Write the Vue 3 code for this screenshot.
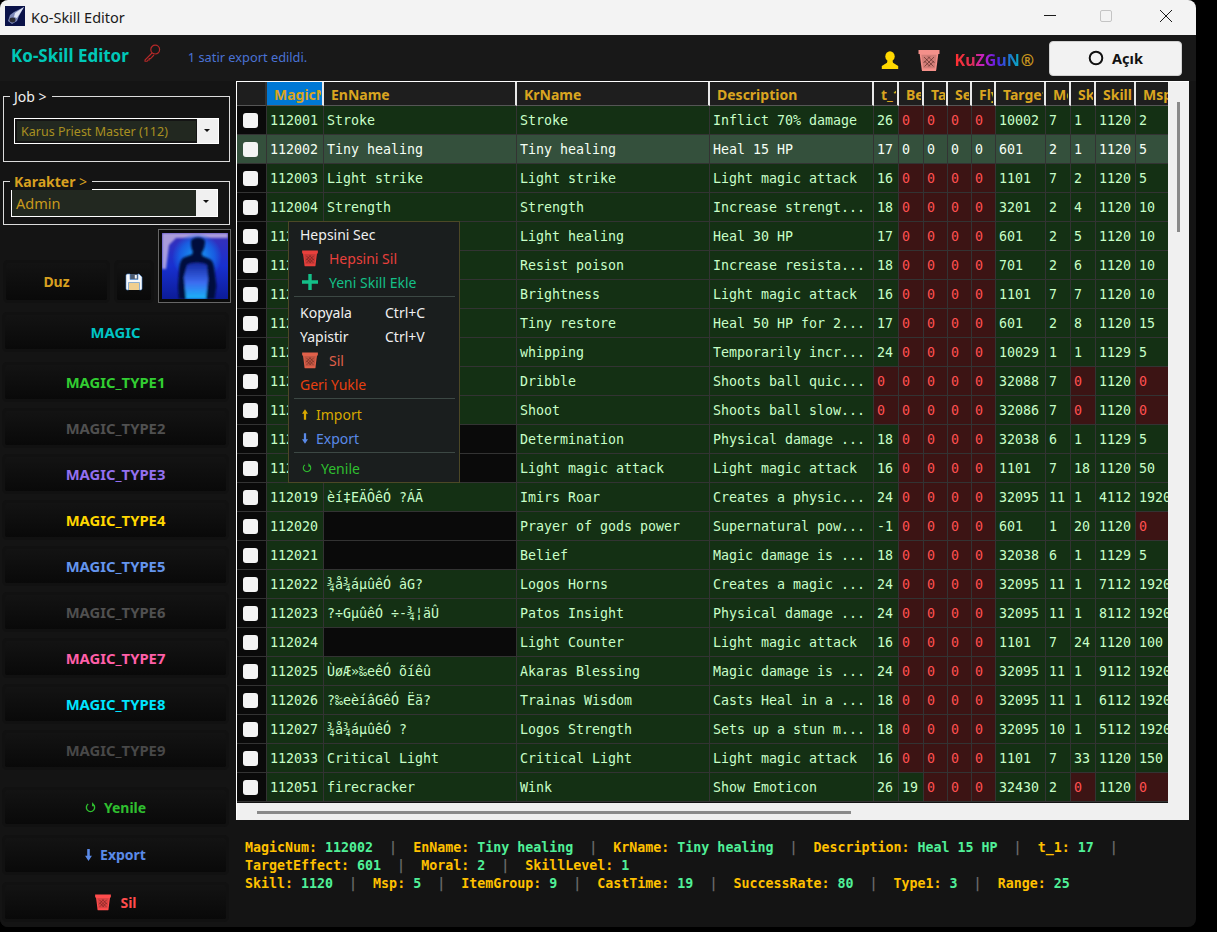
<template>
  <div class="window">
    <svg class="defs" aria-hidden="true">
      <symbol id="trash" viewBox="0 0 24 24">
        <path d="M1.500 2h21v4h-21z" fill="currentColor" />
        <path d="M3.500 6h17l-2 15.500h-13z" fill="currentColor" fill-opacity=".85" stroke="currentColor" stroke-width="1.600" />
        <path d="M5 20.500h14v2.500H5z" fill="currentColor" />
        <path d="M7 9l9.500 9.500M11 8.500l6.500 6.500M7.500 13l5.500 5.500M17 9l-9.500 9.500M13 8.500L6.500 15M16.800 13l-5.500 5.500" stroke="#3a1410" stroke-width=".7" stroke-opacity=".75" fill="none" />
      </symbol>
    </svg>

    <div class="titlebar">
      <svg class="app-icon" viewBox="0 0 20 20">
        <rect width="20" height="20" fill="#0a1248" />
        <path d="M19 1L9 6 5 9l-2 6 4 3 5-3 2-5z" fill="#7c88b8" />
        <path d="M19 1L10 7l-1 4 3 1z" fill="#dfe4f4" />
        <ellipse cx="7.500" cy="14" rx="3" ry="2.400" fill="#2c2c34" />
      </svg>
      <span class="title">Ko-Skill Editor</span>
      <div class="win-btns">
        <svg viewBox="0 0 12 12" width="12" height="12" class="wb1"><path d="M0 5.500h12" stroke="#1a1a1a" /></svg>
        <svg viewBox="0 0 12 12" width="12" height="12" class="wb2"><rect x=".5" y=".5" width="11" height="11" rx="1.500" fill="none" stroke="#c4c4c4" /></svg>
        <svg viewBox="0 0 12 12" width="12" height="12" class="wb3"><path d="M0 0l12 12M12 0L0 12" stroke="#1a1a1a" /></svg>
      </div>
    </div>

    <div class="topbar">
      <span class="brand">Ko-Skill Editor</span>
      <svg class="key" viewBox="0 0 18 18" width="18" height="18">
        <circle cx="12.200" cy="5.600" r="4.400" fill="none" stroke="#b42828" stroke-width="1.200" />
        <path d="M9 9L2 16v1.200h2.200L5 16h1.200v-1.400h1.300L11 11" fill="none" stroke="#b42828" stroke-width="1.100" />
      </svg>
      <span class="status">1 satir export edildi.</span>
      <svg class="person" viewBox="0 0 20 20" width="20" height="20">
        <ellipse cx="10" cy="6.400" rx="4.700" ry="5.200" fill="#ffd800" />
        <path d="M7.500 10.500l-.5 2.200L1.800 16v3h16.400v-3L13 12.700l-.5-2.200z" fill="#ffd800" />
      </svg>
      <svg class="basket-top"><use href="#trash" /></svg>
      <span class="kuzgun"><span class="kuz-text">KuZGuN</span><span class="reg">®</span></span>
      <button class="open-btn">
        <svg viewBox="0 0 16 16" width="16" height="16"><circle cx="8" cy="8" r="6.300" fill="none" stroke="#111" stroke-width="2" /></svg>
        Açık
      </button>
    </div>

    <div class="body">
      <aside class="sidebar">
        <div class="group job-group">
          <span class="legend">Job &gt;</span>
          <div class="combo job-combo">
            <span class="combo-text">Karus Priest Master (112)</span>
            <span class="combo-arrow"></span>
          </div>
        </div>
        <div class="group char-group">
          <span class="legend gold"><b>Karakter</b> &gt;</span>
          <div class="combo char-combo">
            <span class="combo-text">Admin</span>
            <span class="combo-arrow"></span>
          </div>
        </div>
        <div class="tools">
          <button class="side-btn duz">Duz</button>
          <button class="side-btn save">
            <svg viewBox="0 0 18 18" width="18" height="18">
              <path d="M1 2.500A1.500 1.500 0 0 1 2.500 1H14l3 3v11.500a1.500 1.500 0 0 1-1.500 1.500h-13A1.500 1.500 0 0 1 1 15.500z" fill="#f8f8f8" />
              <rect x="5" y="1" width="8" height="5.500" fill="#4c5a70" />
              <rect x="9.800" y="2" width="2" height="3.500" fill="#f4f4f4" />
              <rect x="3.500" y="9.500" width="11" height="7.500" fill="#f0cf90" />
              <path d="M1 2.500A1.500 1.500 0 0 1 2.500 1H5v5.500h8V1h1l3 3v11.500a1.500 1.500 0 0 1-1.500 1.500H14.500V9.500h-11V17h-1A1.500 1.500 0 0 1 1 15.500z" fill="none" stroke="#4a8cd8" stroke-width=".6" />
            </svg>
          </button>
          <div class="avatar">
            <svg viewBox="0 0 66 66" width="66" height="66">
              <defs>
                <linearGradient id="aura" x1="0" y1="0" x2="0" y2="1">
                  <stop offset="0" stop-color="#3a30b8" />
                  <stop offset=".5" stop-color="#1830d0" />
                  <stop offset="1" stop-color="#0c1c98" />
                </linearGradient>
                <radialGradient id="glow" cx="50%" cy="50%" r="50%">
                  <stop offset="0" stop-color="#18a8f8" />
                  <stop offset=".7" stop-color="#1468e8" stop-opacity=".8" />
                  <stop offset="1" stop-color="#1468e8" stop-opacity="0" />
                </radialGradient>
                <linearGradient id="torso" x1="0" y1="0" x2="0" y2="1">
                  <stop offset="0" stop-color="#1428a0" />
                  <stop offset=".55" stop-color="#3c6cf0" />
                  <stop offset="1" stop-color="#18b4f8" />
                </linearGradient>
                <filter id="soft" x="-15%" y="-15%" width="130%" height="130%"><feGaussianBlur stdDeviation="1" /></filter>
              </defs>
              <rect width="66" height="66" fill="url(#aura)" />
              <path d="M0 0h66v5H14L7 12 4 36H0z" fill="#c8b8e4" opacity=".8" filter="url(#soft)" />
              <ellipse cx="35" cy="24" rx="25" ry="24" fill="url(#glow)" />
              <g filter="url(#soft)">
                <path d="M29 9c0-3 3-4.500 7-4.500S43 6 43 9c0 5-2 9-3.500 11l1 3 7 3c3 1.500 4.500 5 5 11l2 16-2 13H17l-1-12 1-17c.5-7 2-11 5-12.500l8-3 1-3c-1.500-2-2-5-2-8.500z" fill="#06103c" />
                <path d="M25 32c4-3 16-3 20 0l1 14-2 20H24l-2-22z" fill="url(#torso)" />
              </g>
            </svg>
          </div>
        </div>
        <div class="type-list">
          <button v-for="b in typeButtons" :key="b.name" class="side-btn type-btn" :style="{ color: b.color }">{{ b.name }}</button>
        </div>
        <div class="action-list">
          <button class="side-btn act green">
            <svg viewBox="0 0 12 12" width="11" height="11"><path d="M3.500 2.200A4.500 4.500 0 1 0 8.500 2.200" fill="none" stroke="currentColor" stroke-width="1.500" /><path d="M8.700 0v4.500h3.300z" fill="currentColor" transform="translate(-1 0)" /></svg>
            Yenile
          </button>
          <button class="side-btn act blue">
            <svg viewBox="0 0 8 14" width="7" height="12"><path d="M2.500 0h3v8H8l-4 6-4-6h2.500z" fill="currentColor" /></svg>
            Export
          </button>
          <button class="side-btn act red">
            <svg class="basket-btn"><use href="#trash" /></svg>
            Sil
          </button>
        </div>
      </aside>

      <main class="main">
        <div class="grid-box">
          <div class="grid-top">
            <div class="viewport">
              <div class="row head">
                <div class="cell"></div>
                <div v-for="(h, i) in headers" :key="h" class="cell" :class="{ current: i === 0 }"><span>{{ h }}</span></div>
              </div>
              <div v-for="r in rows" :key="r[0]" class="row" :class="{ selected: r[0] === '112002' }">
                <div class="cell check"><span class="box"></span></div>
                <div v-for="(c, i) in r" :key="i" class="cell" :class="{ zero: c === '0', blank: c === '' }">{{ c }}</div>
              </div>
            </div>
            <div class="vscroll"><div class="vthumb"></div></div>
          </div>
          <div class="hscroll"><div class="hthumb"></div></div>
        </div>
        <div class="info">
          <div v-for="(line, n) in infoLines" :key="n" class="info-line">
            <template v-for="(item, i) in line" :key="item[0]">
              <span class="k">{{ item[0] }}: </span><span class="v">{{ item[1] }}</span><span v-if="i < line.length - 1 || n === 0" class="sep">{{ SEP }}</span>
            </template>
          </div>
        </div>
      </main>
    </div>

    <div class="menu">
      <div class="mi white">Hepsini Sec</div>
      <div class="mi hot"><svg class="m-basket"><use href="#trash" /></svg>Hepsini Sil</div>
      <div class="mi teal">
        <svg class="m-plus" viewBox="0 0 16 16" width="16" height="16"><path d="M6.300 0h3.400v6.300H16v3.400H9.700V16H6.300V9.700H0V6.300h6.300z" fill="currentColor" /></svg>
        Yeni Skill Ekle
      </div>
      <div class="msep"></div>
      <div class="mi white split"><span>Kopyala</span><span>Ctrl+C</span></div>
      <div class="mi white split"><span>Yapistir</span><span>Ctrl+V</span></div>
      <div class="mi coral"><svg class="m-basket"><use href="#trash" /></svg>Sil</div>
      <div class="mi orange">Geri Yukle</div>
      <div class="msep"></div>
      <div class="mi amber">
        <svg class="m-arrow" viewBox="0 0 8 14" width="6" height="11"><path d="M2.500 14h3V6H8L4 0 0 6h2.500z" fill="currentColor" /></svg>
        Import
      </div>
      <div class="mi blue">
        <svg class="m-arrow" viewBox="0 0 8 14" width="6" height="11"><path d="M2.500 0h3v8H8l-4 6-4-6h2.500z" fill="currentColor" /></svg>
        Export
      </div>
      <div class="msep"></div>
      <div class="mi green">
        <svg class="m-refresh" viewBox="0 0 12 12" width="10" height="10"><path d="M3.500 2.200A4.500 4.500 0 1 0 8.500 2.200" fill="none" stroke="currentColor" stroke-width="1.300" /><path d="M8.700 0v4.500h3.300z" fill="currentColor" transform="translate(-1 0)" /></svg>
        Yenile
      </div>
    </div>
  </div>
</template>

<script setup>
const SEP = '  |  ';

const typeButtons = [
  { name: 'MAGIC', color: '#00c4c4' },
  { name: 'MAGIC_TYPE1', color: '#32cd32' },
  { name: 'MAGIC_TYPE2', color: '#505050' },
  { name: 'MAGIC_TYPE3', color: '#9370f0' },
  { name: 'MAGIC_TYPE4', color: '#ffd700' },
  { name: 'MAGIC_TYPE5', color: '#6495ed' },
  { name: 'MAGIC_TYPE6', color: '#505050' },
  { name: 'MAGIC_TYPE7', color: '#ff5fa8' },
  { name: 'MAGIC_TYPE8', color: '#00e5ff' },
  { name: 'MAGIC_TYPE9', color: '#484848' },
];

const headers = ['MagicNum', 'EnName', 'KrName', 'Description', 't_1', 'BeforeAction', 'TargetAction', 'SelfEffect', 'FlyingEffect', 'TargetEffect', 'Moral', 'SkillLevel', 'Skill', 'Msp'];

const rows = [
  '112001|Stroke|Stroke|Inflict 70% damage|26|0|0|0|0|10002|7|1|1120|2',
  '112002|Tiny healing|Tiny healing|Heal 15 HP|17|0|0|0|0|601|2|1|1120|5',
  '112003|Light strike|Light strike|Light magic attack|16|0|0|0|0|1101|7|2|1120|5',
  '112004|Strength|Strength|Increase strengt...|18|0|0|0|0|3201|2|4|1120|10',
  '112005|Light healing|Light healing|Heal 30 HP|17|0|0|0|0|601|2|5|1120|10',
  '112006|Resist poison|Resist poison|Increase resista...|18|0|0|0|0|701|2|6|1120|10',
  '112007|Brightness|Brightness|Light magic attack|16|0|0|0|0|1101|7|7|1120|10',
  '112008|Tiny restore|Tiny restore|Heal 50 HP for 2...|17|0|0|0|0|601|2|8|1120|15',
  '112009|whipping|whipping|Temporarily incr...|24|0|0|0|0|10029|1|1|1129|5',
  '112010|Dribble|Dribble|Shoots ball quic...|0|0|0|0|0|32088|7|0|1120|0',
  '112011|Shoot|Shoot|Shoots ball slow...|0|0|0|0|0|32086|7|0|1120|0',
  '112012||Determination|Physical damage ...|18|0|0|0|0|32038|6|1|1129|5',
  '112018||Light magic attack|Light magic attack|16|0|0|0|0|1101|7|18|1120|50',
  '112019|èí‡EÄÔêÓ ?ÁÃ|Imirs Roar|Creates a physic...|24|0|0|0|0|32095|11|1|4112|1920',
  '112020||Prayer of gods power|Supernatural pow...|-1|0|0|0|0|601|1|20|1120|0',
  '112021||Belief|Magic damage is ...|18|0|0|0|0|32038|6|1|1129|5',
  '112022|¾å¾áµûêÓ âG?|Logos Horns|Creates a magic ...|24|0|0|0|0|32095|11|1|7112|1920',
  '112023|?÷GµûêÓ ÷-¾¦äÛ|Patos Insight|Physical damage ...|24|0|0|0|0|32095|11|1|8112|1920',
  '112024||Light Counter|Light magic attack|16|0|0|0|0|1101|7|24|1120|100',
  '112025|ÙøÆ»‰eêÓ õíêû|Akaras Blessing|Magic damage is ...|24|0|0|0|0|32095|11|1|9112|1920',
  '112026|?‰eèíâGêÓ Ëä?|Trainas Wisdom|Casts Heal in a ...|18|0|0|0|0|32095|11|1|6112|1920',
  '112027|¾å¾áµûêÓ ?|Logos Strength|Sets up a stun m...|18|0|0|0|0|32095|10|1|5112|1920',
  '112033|Critical Light|Critical Light|Light magic attack|16|0|0|0|0|1101|7|33|1120|150',
  '112051|firecracker|Wink|Show Emoticon|26|19|0|0|0|32430|2|0|1120|0',
].map((line) => line.split('|'));

const infoLines = [
  [['MagicNum', '112002'], ['EnName', 'Tiny healing'], ['KrName', 'Tiny healing'], ['Description', 'Heal 15 HP'], ['t_1', '17']],
  [['TargetEffect', '601'], ['Moral', '2'], ['SkillLevel', '1']],
  [['Skill', '1120'], ['Msp', '5'], ['ItemGroup', '9'], ['CastTime', '19'], ['SuccessRate', '80'], ['Type1', '3'], ['Range', '25']],
];
</script>

<style>
html,
body {
  background: #000;
  overflow: hidden;
}
</style>

<style scoped>
.window {
  position: relative;
  width: 1196px;
  height: 927px;
  display: flex;
  flex-direction: column;
  background: #141414;
  border-radius: 8px;
  overflow: hidden;
  font-family: "Noto Sans", sans-serif;
}
.defs {
  position: absolute;
  width: 0;
  height: 0;
}
.titlebar {
  height: 35px;
  flex-shrink: 0;
  display: flex;
  align-items: center;
  background: #f3f3f3;
  color: #1a1a1a;
  font-size: 14.500px;
}
.app-icon {
  width: 20px;
  height: 20px;
  margin: 0 6px 3px 5px;
}
.title {
  margin-bottom: 2px;
}
.win-btns {
  margin-left: auto;
  margin-bottom: 3px;
  display: flex;
  align-items: center;
}
.wb2 {
  margin-left: 44px;
}
.wb3 {
  margin: 0 24px 0 48px;
}
.topbar {
  height: 46px;
  flex-shrink: 0;
  display: flex;
  align-items: center;
  background: #181818;
}
.brand {
  margin-left: 11px;
  color: #00c8b8;
  font-size: 17px;
  font-weight: 700;
  margin-bottom: 5px;
}
.key {
  margin: -10px 0 0 14px;
}
.status {
  margin-left: 27px;
  margin-bottom: 2px;
  color: #4a72d4;
  font-size: 12.800px;
}
.person {
  margin-left: auto;
  margin-top: 3px;
}
.basket-top {
  width: 24px;
  height: 24px;
  margin: 3px 0 0 17px;
  color: #f4908a;
}
.kuzgun {
  margin: 3px 0 0 14px;
  font-size: 16px;
  font-weight: 700;
}
.kuz-text {
  background: linear-gradient(90deg, #ff3030 0%, #e03050 25%, #c020d0 45%, #5020e0 65%, #2070d0 82%, #08b0c0 100%);
  -webkit-background-clip: text;
  background-clip: text;
  color: transparent;
}
.reg {
  margin-left: 1px;
  color: #c8961e;
}
.open-btn {
  width: 133px;
  height: 35px;
  margin: 0 14px 0 15px;
  display: flex;
  align-items: center;
  justify-content: center;
  gap: 8px;
  background: #f2f2f2;
  border: 1px solid #d0d0d0;
  border-radius: 4px;
  color: #111;
  font-family: inherit;
  font-size: 14.500px;
  font-weight: 700;
}
.body {
  flex: 1;
  display: flex;
  min-height: 0;
}
.sidebar {
  width: 236px;
  flex-shrink: 0;
  box-sizing: border-box;
  padding-left: 3px;
  background: #141414;
}
.group {
  position: relative;
  width: 227px;
  box-sizing: border-box;
  border: 1px solid #dcdcdc;
}
.job-group {
  height: 66px;
  margin-top: 15px;
  padding: 21px 10px 0;
}
.char-group {
  height: 44px;
  margin-top: 19px;
  padding: 7px 11px 0 7px;
}
.legend {
  position: absolute;
  top: -9px;
  left: 6px;
  padding: 0 5px 0 4px;
  background: #141414;
  color: #f0f0f0;
  font-size: 14px;
  line-height: 17px;
}
.legend.gold {
  color: #d8a020;
  top: -9px;
}
.combo {
  display: flex;
  box-sizing: border-box;
  border: 1px solid #fff;
  background: #f0f0f0;
}
.job-combo {
  height: 26px;
}
.char-combo {
  height: 28px;
}
.combo-text {
  flex: 1;
  display: flex;
  align-items: center;
  padding-left: 4px;
  background: #222820;
  color: #a89020;
  font-size: 12.500px;
}
.job-combo .combo-text {
  border: 2px solid #141414;
  border-right-width: 1px;
}
.char-combo .combo-text {
  color: #c89a1c;
  font-size: 14.500px;
}
.combo-arrow {
  width: 21px;
  position: relative;
}
.combo-arrow::after {
  content: "";
  position: absolute;
  left: 7px;
  top: 10px;
  border: 3px solid transparent;
  border-top: 3px solid #111;
  border-left-width: 3.500px;
  border-right-width: 3.500px;
}
.tools {
  height: 74px;
  margin-top: 4px;
  display: flex;
  align-items: flex-end;
}
.side-btn {
  display: flex;
  align-items: center;
  justify-content: center;
  box-sizing: border-box;
  padding: 0;
  border: 3px solid #111;
  border-radius: 5px;
  background: linear-gradient(#131313, #090909);
  font-family: inherit;
  font-size: 14px;
  font-weight: 700;
}
.duz {
  width: 107px;
  height: 43px;
  color: #d8a020;
}
.save {
  width: 40px;
  height: 43px;
  margin-left: 4px;
}
.avatar {
  width: 73px;
  height: 74px;
  box-sizing: border-box;
  margin-left: 4px;
  border: 1px solid #666;
  padding: 3px;
  background: #0a0a0a;
}
.avatar svg {
  display: block;
}
.type-list {
  display: flex;
  flex-direction: column;
  gap: 6px;
  margin-top: 9px;
  margin-left: -1px;
}
.type-btn {
  width: 227px;
  height: 40px;
  font-size: 14.800px;
}
.type-btn:first-child {
  margin-bottom: 4px;
}
.action-list {
  display: flex;
  flex-direction: column;
  gap: 7.500px;
  margin: 17px 0 0 -1px;
}
.act {
  width: 227px;
  height: 40px;
  gap: 8px;
}
.act.green,
.mi.green {
  color: #2fbf2f;
}
.act.blue,
.mi.blue {
  color: #5a8ae8;
}
.act.red {
  color: #ff4c4c;
}
.basket-btn {
  width: 18px;
  height: 18px;
}
.main {
  flex: 1;
  min-width: 0;
  display: flex;
  flex-direction: column;
}
.grid-box {
  width: 953px;
  height: 739px;
  box-sizing: border-box;
  display: flex;
  flex-direction: column;
  background: #f0f0f0;
  border-top: 1px solid #fff;
  border-left: 1px solid #fff;
}
.grid-top {
  height: 721px;
  display: flex;
}
.viewport {
  width: 931px;
  overflow: hidden;
  background: #141414;
}
.vscroll {
  flex: 1;
  padding: 20px 0 0 9px;
}
.vthumb {
  width: 3px;
  height: 130px;
  background: #8a8a8a;
}
.hscroll {
  flex: 1;
  padding: 8px 0 0 20px;
}
.hthumb {
  width: 594px;
  height: 3px;
  background: #8a8a8a;
}
.row {
  display: grid;
  grid-template-columns: 30px 57px 193px 193px 164px 25px 25px 24px 24px 24px 50px 25px 25px 40px 40px;
  width: 939px;
  height: 29px;
  font-family: "DejaVu Sans Mono", monospace;
  font-size: 13.300px;
}
.cell {
  box-sizing: border-box;
  padding-left: 3px;
  overflow: hidden;
  white-space: nowrap;
  line-height: 30px;
  background: #143014;
  color: #c8ffc8;
  border-right: 1px solid #333;
  border-bottom: 1px solid #333;
}
.cell.zero {
  background: #3c1414;
  color: #ff5050;
}
.cell.blank {
  background: #0a0a0a;
}
.cell.check {
  display: flex;
  align-items: center;
  justify-content: center;
  padding: 0 2px 0 0;
  background: #0a0a0a;
}
.box {
  width: 15px;
  height: 15px;
  border-radius: 3px;
  background: #f4f4f4;
}
.row.selected .cell {
  background: #34503c;
  color: #f4fff4;
}
.row.head {
  height: 24px;
  font-family: "Noto Sans", sans-serif;
  font-size: 14px;
  font-weight: 700;
}
.head .cell {
  height: 24px;
  padding: 0 1px 0 7px;
  line-height: 26px;
  background: #1e1e1e;
  color: #daa520;
  border-right: 2px solid #e8e8e8;
  border-bottom: 1px solid #555;
}
.head .cell:first-child {
  border-right-color: #333;
}
.head .cell.current {
  background: #0078d4;
}
.head .cell span {
  display: block;
  overflow: hidden;
}
.info {
  padding: 19px 0 0 9px;
  font-family: "DejaVu Sans Mono", monospace;
  font-size: 13.300px;
  font-weight: 700;
}
.info-line {
  height: 18px;
  line-height: 18px;
  white-space: pre;
}
.k {
  color: #ffc000;
}
.v {
  color: #50f098;
}
.sep {
  color: #666;
}
.menu {
  position: absolute;
  left: 288px;
  top: 221px;
  width: 172px;
  height: 262px;
  box-sizing: border-box;
  padding: 0 4px 0 5px;
  background: #1a1e1e;
  border: 1px solid #4c4826;
  font-size: 14px;
}
.mi {
  height: 24px;
  display: flex;
  align-items: center;
  padding-left: 6px;
}
.msep {
  height: 1px;
  margin: 2px 0 3px;
  background: #3c4844;
}
.mi.white {
  color: #f0f0f0;
}
.split span:first-child {
  width: 85px;
}
.hot {
  color: #e8403c;
}
.teal {
  color: #14c088;
}
.coral {
  color: #e0604a;
}
.orange {
  color: #e84010;
}
.amber {
  color: #d8a800;
}
.m-basket {
  width: 18px;
  height: 18px;
  margin-right: 10px;
  margin-left: 1px;
}
.m-plus {
  margin: 0 11px 0 2px;
}
.m-arrow {
  margin: 0 8px 0 2px;
}
.m-refresh {
  margin: 0 9px 0 2px;
}
</style>
